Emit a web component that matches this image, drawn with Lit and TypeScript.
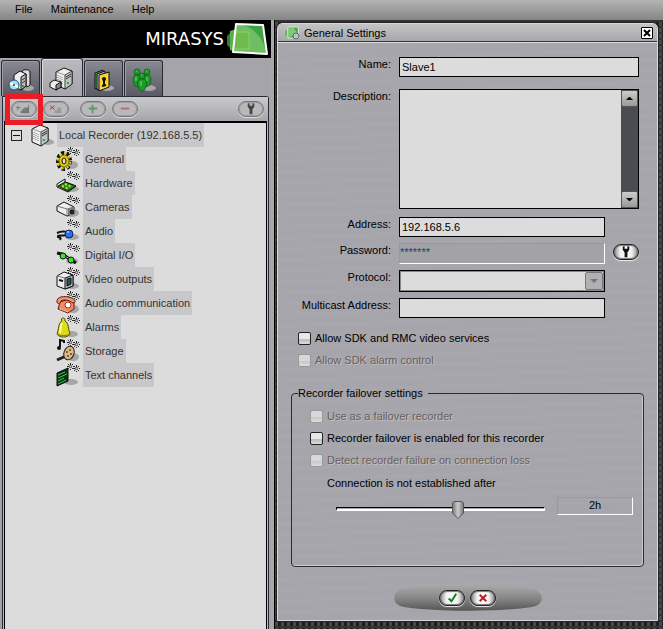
import { LitElement, html, css, svg } from "lit";
import { customElement, property } from "lit/decorators.js";

const shadow = (cx: number, cy: number, rx: number, ry: number) =>
  svg`<ellipse cx=${cx} cy=${cy} rx=${rx} ry=${ry} fill="#a6a6a6"/>`;

const star = (x: number, y: number) => svg`<g transform="translate(${x + 0.5} ${y + 0.5})">
  <path d="M0 -3.5V3.5M-3.5 0H3.5" stroke="#222" stroke-dasharray="2 1"/>
  <path d="M-2.5 -2.5L2.5 2.5M-2.5 2.5L2.5 -2.5" stroke="#333"/>
  <rect x="-1.5" y="-1.5" width="3" height="3" fill="#777"/><rect x="-.5" y="-.5" width="1" height="1" fill="#ccc"/></g>`;
const stars = svg`${star(14, 3)}${star(20, 5)}`;

const server = svg`
  <path d="M2 6L10 2L18 5V18L11 23L2 19Z" fill="#eee" stroke="#111"/>
  <path d="M11 9L18 5V18L11 23Z" fill="#c4c4c4" stroke="#111" stroke-width=".7"/>
  <path d="M2 6L11 9V22" fill="none" stroke="#888" stroke-width=".8"/>
  <path d="M4 9v8M6 10v8M8 11v8" stroke="#777" stroke-dasharray="1 1"/>
  <path d="M12 11l5-3M12 13l5-3" stroke="#333"/>
  <rect x="13" y="16" width="2" height="2" fill="#16b43a"/>`;

const icons: Record<string, unknown> = {
  recorder: svg`${shadow(18, 19, 6, 3)}${server}`,
  general: svg`${shadow(16, 18, 6, 4)}
    <ellipse cx="8" cy="14" rx="6" ry="8" fill="none" stroke="#111" stroke-width="4" stroke-dasharray="3 2"/>
    <ellipse cx="8" cy="14" rx="6" ry="7" fill="none" stroke="#e2c90c" stroke-width="3" stroke-dasharray="2 3" stroke-dashoffset="-.5"/>
    <ellipse cx="8" cy="14" rx="5" ry="6" fill="#e2c90c" stroke="#7d6d00"/>
    <ellipse cx="8" cy="14" rx="2" ry="3" fill="#ddd" stroke="#111"/>${stars}`,
  hardware: svg`${shadow(15, 18, 8, 3)}
    <path d="M1 13L9 8V11L20 15L12 21L1 16Z" fill="#eee" stroke="#111"/>
    <path d="M2 15L9 11L20 15L12 20Z" fill="#168c22" stroke="#111"/>
    <path d="M6 15l7 3M9 13l7 3" stroke="#d9e21b" stroke-width="2" stroke-dasharray="2 2"/>${stars}`,
  cameras: svg`${shadow(16, 18, 7, 4)}
    <path d="M1 11L8 7L18 12V18L11 21L1 16Z" fill="#eee" stroke="#111"/>
    <path d="M1 11L11 14L18 12M11 14V21" fill="none" stroke="#777"/>
    <path d="M12 14L18 12V18L12 20Z" fill="#777"/><circle cx="16" cy="17" r="3" fill="#222" stroke="#888"/>${stars}`,
  audio: svg`${shadow(16, 18, 7, 3)}
    <path d="M1 14C7 11 13 13 12 15C9 18 1 15 2 18C3 19 6 18 4 21" fill="none" stroke="#111" stroke-width="2"/>
    <circle cx="13" cy="15" r="4" fill="#2871ed" stroke="#0b2460"/><circle cx="12" cy="13" r="1" fill="#b6d1ff"/>${stars}`,
  io: svg`${shadow(16, 18, 6, 3)}
    <path d="M1 10L6 11L20 20" fill="none" stroke="#111" stroke-width="3"/>
    <path d="M9 13l5 3" stroke="#aaa"/>
    <circle cx="7" cy="13" r="3" fill="#35e52a" stroke="#111"/><circle cx="15" cy="17" r="3" fill="#35e52a" stroke="#111"/>${stars}`,
  video: svg`${shadow(16, 19, 7, 3)}
    <path d="M1 9L8 5L17 8V19L9 22L1 19Z" fill="#eee" stroke="#111"/>
    <path d="M9 11L17 8V19L9 22Z" fill="#bbb" stroke="#111"/><path d="M1 9L9 11" stroke="#777"/>
    <path d="M11 12L15 11V17L11 19Z" fill="#20566c" stroke="#111"/><path d="M3 13l4 1" stroke="#111" stroke-width="2"/>${stars}`,
  phone: svg`${shadow(17, 18, 6, 4)}
    <path d="M4 11L2 18L12 22L18 18V11L13 8Z" fill="#f28a66" stroke="#5d1d0c"/>
    <path d="M1 11C0 6 8 4 16 7C20 9 20 12 17 12C13 9 7 8 5 10C5 13 1 13 1 11Z" fill="#f4977a" stroke="#5d1d0c"/>
    <circle cx="12" cy="14" r="3" fill="#fff" stroke="#a13a1c"/><path d="M4 18l8 3" stroke="#fff" stroke-dasharray="1 1"/>${stars}`,
  alarms: svg`${shadow(16, 19, 6, 3)}
    <path d="M7 3C5 3 5 6 6 6C2 8 3 14 1 19C3 23 12 23 14 19C12 14 13 8 9 6C9 3 8 3 7 3Z" fill="#dedb18" stroke="#4d4b00"/>
    <path d="M6 8C4 12 5 15 4 18" stroke="#fffca0" stroke-width="2" fill="none"/>
    <path d="M1 19C4 21 11 21 14 19" stroke="#77740a" fill="none"/>${stars}`,
  storage: svg`${shadow(17, 18, 6, 4)}
    <path d="M4 8V1L8 2V4" fill="none" stroke="#111" stroke-width="2"/><circle cx="3" cy="9" r="2" fill="#111"/>
    <path d="M1 21L10 17" stroke="#222" stroke-width="3"/>
    <ellipse cx="13" cy="14" rx="5" ry="7" fill="#dcb985" stroke="#222" transform="rotate(20 13 14)"/>
    <circle cx="14" cy="11" r="1" fill="#5d4420"/><circle cx="11" cy="13" r="1" fill="#5d4420"/><circle cx="15" cy="15" r="1" fill="#5d4420"/><circle cx="12" cy="17" r="1" fill="#5d4420"/>${stars}`,
  text: svg`${shadow(15, 19, 7, 3)}
    <path d="M1 10L12 5V18L1 23Z" fill="#0c3012" stroke="#111"/>
    <path d="M2 12l7-3M2 15l9-4M2 18l6-3M2 21l8-4" stroke="#3ecb50"/>${stars}`,
  discServer: svg`${shadow(20, 20, 6, 3)}
    <path d="M14 4C14 1 22 1 22 4V17C21 19 17 19 14 18Z" fill="#ddd" stroke="#111"/>
    <path d="M6 7L12 3L18 6V18L13 22L6 19Z" fill="#eee" stroke="#111"/><path d="M13 9L18 6V18L13 22Z" fill="#bbb" stroke="#111"/>
    <path d="M14 12l3-2M14 15l3-2" stroke="#333"/><rect x="14" y="17" width="2" height="2" fill="#16b43a"/>
    <circle cx="6" cy="17" r="5" fill="#a8dcf4" stroke="#16506c"/><path d="M2 15l8 4" stroke="#fff" stroke-width="2"/><circle cx="6" cy="17" r="1" fill="#333"/>`,
  camServer: svg`${shadow(20, 20, 5, 3)}
    <g transform="translate(5 -1)">${server}</g>
    <path d="M1 16L5 13L12 15V20L7 23L1 20Z" fill="#eee" stroke="#111"/><path d="M7 18L12 15V20L7 23Z" fill="#888" stroke="#111"/>`,
  keys: svg`${shadow(16, 20, 7, 3)}
    <path d="M4 5L12 2V18L4 21Z" fill="#25c232" stroke="#111"/><path d="M6 6L14 3V19L6 22Z" fill="#f08be8" stroke="#111"/>
    <path d="M8 7L18 4V19L8 23Z" fill="#f2d631" stroke="#111"/>
    <circle cx="13" cy="11" r="2" fill="#111"/><path d="M13 11V18M11 18l4-1" stroke="#111" stroke-width="2"/>`,
  people: svg`${shadow(18, 20, 7, 3)}
    <g fill="#1d9a2a" stroke="#0b5c13" stroke-width=".7"><circle cx="6" cy="4" r="3"/><circle cx="16" cy="4" r="3"/>
    <path d="M4 7H9L10 15L7 19L3 17L2 10Z"/><path d="M13 7H18L20 10L19 17L15 19L12 15Z"/>
    <circle cx="11" cy="8" r="3"/><path d="M8 11H14L16 15L14 21L12 23H10L8 21L6 15Z"/></g>
    <path d="M5 3h1M15 3h1M10 7h1M10 13v5M5 9v4M16 9v4" stroke="#6bdc70"/>`,
};

const glyphs: Record<string, unknown> = {
  add: svg`<path d="M6 4v5M4 6h5" stroke="#4c8f55"/><path d="M9 12V9h2V7h2V6h4V3h1V12Z" fill="#777"/>`,
  del: svg`<path d="M6 4l5 4M6 8l5-4" stroke="#bd3030"/><path d="M11 12V9h3V6h4V12Z" fill="#999"/>`,
  plus: svg`<path d="M8 7H17M12 3V12" stroke="#5c9b65" stroke-width="2"/>`,
  minus: svg`<path d="M8 7H17" stroke="#b96a6a" stroke-width="2"/>`,
  wrench: svg`<path d="M9 2V5L11 8V13H14V8L16 5V2L14 1V4H11V1Z" fill="currentColor"/>`,
  ok: svg`<path d="M9 8L12 11L17 3" fill="none" stroke="#098011" stroke-width="2"/>`,
  cancel: svg`<path d="M9 4L16 11M9 11L16 4" fill="none" stroke="#b51a22" stroke-width="2"/>`,
};

@customElement("pill-button")
class PillButton extends LitElement {
  @property() glyph = "ok";
  @property() label = "";
  @property({ type: Boolean }) faded = false;
  static styles = css`
    :host { display: block; height: 16px; }
    button { display: block; width: 26px; height: 16px; padding: 0; border: 1px solid #222; border-radius: 8px; color: #111;
      background: linear-gradient(90deg, #888, #eee 25%, #fff 50%, #eee 75%, #888);
      box-shadow: 0 1px 1px #eee, inset 0 0 1px 1px #777; }
    .faded { border-color: #77777b; color: #444; background: #b9b9bc; box-shadow: 0 1px 0 #d9d9db, inset 0 0 0 1px #a0a0a4; }
    svg { display: block; width: 24px; height: 14px; }
  `;
  render() {
    return html`<button type="button" class=${this.faded ? "faded" : ""} aria-label=${this.label}>
      <svg viewBox="0 0 25 15">${glyphs[this.glyph]}</svg></button>`;
  }
}

@customElement("recorder-panel")
class RecorderPanel extends LitElement {
  static styles = css`
    :host { display: flex; flex-direction: column; background: #a5a4aa; border-right: 3px solid #a9a9ad; }
    .brand { display: flex; align-items: center; justify-content: flex-end; gap: 3px; height: 38px; padding-right: 2px; background: #000; color: #fff;
      font: 18px/24px "DejaVu Sans", sans-serif; }
    .logo { width: 42px; height: 34px; }
    .tabs { display: flex; align-items: flex-end; gap: 1px; height: 38px; padding-left: 1px; }
    .tab { width: 39px; height: 36px; padding: 4px 0 0; border: 1px solid #2a2a35; border-bottom: 0; border-radius: 3px 3px 0 0;
      background: linear-gradient(#898993, #5a5a66); box-shadow: inset 1px 1px 0 #9d9da6; }
    .tab.on { width: 42px; height: 38px; background: linear-gradient(#b9b9be, #a5a5ab); box-shadow: inset 1px 1px 0 #ddd; }
    .tab svg { display: block; margin: 0 auto; width: 26px; height: 26px; }
    .box { display: flex; flex: 1; flex-direction: column; margin: 0 2px; border: 1px solid #2a2a35; border-bottom: 0; border-radius: 0 3px 0 0; background: #bdbdc0; }
    .bar { position: relative; display: flex; align-items: center; gap: 6px; height: 24px; padding: 0 4px 0 8px; background: linear-gradient(#c9c9cb, #a6a6aa); }
    .gap { margin-left: 5px; }
    .end { margin-left: auto; }
    .mark { position: absolute; left: 2px; top: -3px; width: 28px; height: 21px; border: 5px solid #ed1c24; pointer-events: none; }
    .tree { flex: 1; margin: 0 1px; border: 1px solid #000; border-width: 2px 1px 0; background: #dcdcdc; color: #333; }
    ul { margin: 0; padding: 0; list-style: none; }
    .row { display: flex; align-items: center; gap: 3px; height: 24px; }
    .root { padding-left: 6px; }
    .child { padding-left: 51px; }
    .row svg { width: 24px; height: 24px; }
    .name { padding: 0 2px; line-height: 24px; background: #c8c8ca; }
    .fold { width: 11px; height: 11px; margin-right: 5px; padding: 0; border: 1px solid #222; background: #dcdcdc; }
    .fold::before { content: ""; display: block; width: 7px; height: 1px; margin: 0 1px; background: #111; }
  `;
  tabs = [["discServer", "System"], ["camServer", "Recorders"], ["keys", "Profiles"], ["people", "Users"]];
  items = [
    ["general", "General"], ["hardware", "Hardware"], ["cameras", "Cameras"], ["audio", "Audio"], ["io", "Digital I/O"],
    ["video", "Video outputs"], ["phone", "Audio communication"], ["alarms", "Alarms"], ["storage", "Storage"], ["text", "Text channels"],
  ];
  render() {
    return html`
      <div class="brand"><span>MIRASYS</span>
        <svg class="logo" viewBox="0 0 42 34">
          <path d="M4 10L0 14V23L4 27Z" fill="#347e31"/><path d="M9 7L3 9V28L9 30Z" fill="#5bae4e"/>
          <path d="M9 2L36 3L40 32L6 30Z" fill="#3fa344"/>
          <path d="M9 2L16 3C29 7 37 18 39 31L6 30Z" fill="#6fbe63"/>
          <path d="M8 10H22V27H7" fill="#6fbb4d" stroke="#8bcf6c"/>
          <path d="M9 2L36 3L40 32L6 30Z" fill="none" stroke="#fff" stroke-width="2" stroke-linejoin="round"/>
        </svg>
      </div>
      <div class="tabs">
        ${this.tabs.map(([icon, name], i) => html`
          <button class="tab ${i === 1 ? "on" : ""}" aria-label=${name}><svg viewBox="0 0 26 26">${icons[icon]}</svg></button>`)}
      </div>
      <div class="box">
        <div class="bar">
          <pill-button faded glyph="add" label="Add recorder"></pill-button>
          <pill-button faded glyph="del" label="Remove recorder"></pill-button>
          <pill-button class="gap" faded glyph="plus" label="Add"></pill-button>
          <pill-button faded glyph="minus" label="Remove"></pill-button>
          <pill-button class="end" faded glyph="wrench" label="Settings"></pill-button>
          <span class="mark"></span>
        </div>
        <div class="tree">
          <div class="row root"><button class="fold" aria-label="Collapse"></button>
            <svg viewBox="0 0 24 24">${icons.recorder}</svg><span class="name">Local Recorder (192.168.5.5)</span></div>
          <ul>${this.items.map(([icon, name]) => html`
            <li class="row child"><svg viewBox="0 0 24 24">${icons[icon]}</svg><span class="name">${name}</span></li>`)}</ul>
        </div>
      </div>`;
  }
}

@customElement("settings-dialog")
class SettingsDialog extends LitElement {
  static styles = css`
    :host { display: flex; flex-direction: column; border: 1px solid #d2dede; border-radius: 5px 5px 0 0; outline: 1px solid #222;
      background: repeating-linear-gradient(178deg, #a6a5ab 0 3px, #a8a7ad 4px 6px, #a6a5ab 7px 11px); color: #000; }
    header { display: flex; align-items: center; gap: 4px; height: 17px; padding: 0 4px 0 6px; border-bottom: 1px solid #333;
      border-radius: 5px 5px 0 0; background: linear-gradient(#c4c4c6, #a8a8ac); box-shadow: 0 1px 0 #ddd; }
    h1 { flex: 1; margin: 0; font-size: 11px; font-weight: 400; }
    header svg { width: 16px; height: 14px; }
    .close { width: 12px; height: 12px; padding: 0; border: 1px solid #000; border-radius: 1px; background: #fff; }
    .close svg { display: block; width: 10px; height: 10px; }
    form { display: flex; flex-direction: column; flex: 1; padding: 15px 13px 9px; }
    .fields { display: grid; grid-template-columns: 100px 1fr 26px; column-gap: 8px; padding-right: 5px; }
    .fields > label { text-align: right; white-space: nowrap; line-height: 14px; }
    input, textarea, select { box-sizing: border-box; margin: 0; font: inherit; color: #000; }
    .text { width: 100%; height: 20px; padding: 0 2px; border: 1px solid #000; border-radius: 0; background: #dcdcdc; outline: none; }
    .wide { grid-column: 2 / 4; }
    .area { position: relative; height: 120px; margin: 12px 0 8px; }
    textarea { display: block; resize: none; overflow: hidden; }
    .area textarea { height: 120px; }
    .scroll { position: absolute; right: 1px; top: 1px; bottom: 1px; display: flex; flex-direction: column; justify-content: space-between; width: 17px; background: #4b4b52; }
    .scroll button { height: 17px; padding: 0; border: 1px solid #555; border-radius: 2px; background: linear-gradient(#ccc, #999); }
    .scroll svg { display: block; margin: auto; width: 7px; height: 5px; }
    .desc { margin-top: 12px; }
    .pass { height: 21px; margin: 6px 0; padding: 0 0 4px; border-color: #999 #fff #fff #999; background: #a3a3a6; }
    .pass, .pass:disabled { color: #16416c; }
    .combo { position: relative; height: 22px; margin-bottom: 6px; }
    select { appearance: none; }
    .combo .text { height: 22px; box-shadow: inset 0 0 0 1px #888; }
    .combo svg { position: absolute; right: 2px; top: 2px; width: 16px; height: 16px; border: 1px solid #777; border-radius: 2px; background: #b1b1b4; pointer-events: none; }
    .tool { margin-top: 7px; }
    .low { margin-top: 6px; }
    .checks { display: grid; gap: 8px; margin: 13px 0 0 7px; }
    .check { display: flex; align-items: center; gap: 4px; height: 14px; }
    .check input { appearance: none; width: 13px; height: 13px; border: 1px solid #222; border-radius: 2px; background: linear-gradient(#e8e8e8 50%, #bbb 60%, #ddd); }
    .check input:disabled { border-color: #999; background: linear-gradient(#d8d8d8 50%, #c8c8c8 60%, #ddd); }
    .off { color: #6a5f5d; text-shadow: 1px 1px 0 #c0c0c0; }
    fieldset { min-width: 0; height: 181px; box-sizing: border-box; margin: 19px 0 0; padding: 9px 10px 0 18px; border: 1px solid #2a2a35; border-radius: 4px; box-shadow: inset -1px -1px 0 #ccc; }
    legend { margin-left: -12px; padding: 0 5px 0 0; line-height: 14px; }
    .group { display: grid; gap: 8px; }
    .after { margin: 9px 0 7px 17px; line-height: 14px; }
    .slide { display: grid; grid-template-columns: 1fr 76px; gap: 12px; align-items: start; padding-left: 26px; }
    .range { appearance: none; width: 100%; height: 24px; background: none; }
    .range::-webkit-slider-runnable-track { height: 4px; border: 1px solid #000; border-color: #000 #fff #fff #000; border-bottom-width: 2px; box-sizing: border-box; }
    .range::-webkit-slider-thumb { appearance: none; width: 12px; height: 18px; margin-top: -7px; border: 0; border-radius: 0;
      background: url("data:image/svg+xml,%3Csvg xmlns='http://www.w3.org/2000/svg' viewBox='0 0 12 18'%3E%3ClinearGradient id='t'%3E%3Cstop stop-color='%23777'/%3E%3Cstop offset='.5' stop-color='%23ccc'/%3E%3Cstop offset='1' stop-color='%23777'/%3E%3C/linearGradient%3E%3Cpath d='M2 .5H10L11.5 2V12L6 17.5L.5 12V2Z' fill='url(%23t)' stroke='%23555'/%3E%3C/svg%3E") no-repeat center / 12px 18px; }
    output { height: 16px; border: 1px solid #999; border-right-color: #fff; border-bottom-color: #fff; line-height: 15px; text-align: center; }
    footer { display: flex; justify-content: center; margin-top: auto; }
    .pad { position: relative; display: flex; align-items: center; justify-content: center; gap: 5px; width: 148px; height: 26px; }
    .plate { position: absolute; inset: 0; width: 100%; height: 100%; }
    .pad pill-button { position: relative; }
  `;
  check(label: string, off = false) {
    return html`<label class="check ${off ? "off" : ""}"><input type="checkbox" ?disabled=${off}>${label}</label>`;
  }
  render() {
    return html`
      <header>
        <svg viewBox="0 0 16 14"><path d="M3 3L1 5V9L3 11Z" fill="#6ab85c"/><path d="M4 1L14 1L15 12L4 12Z" fill="#42a344" stroke="#d8f0d5"/><path d="M5 2L10 2L14 8L5 11Z" fill="#7fca75"/><circle cx="12" cy="10" r="3" fill="#bbc4cf" stroke="#667"/></svg>
        <h1>General Settings</h1>
        <button class="close" aria-label="Close"><svg viewBox="0 0 10 10"><path d="M2 2L8 8M8 2L2 8" stroke="#000" stroke-width="2"/></svg></button>
      </header>
      <form>
        <div class="fields">
          <label for="name">Name:</label><input id="name" class="text wide" value="Slave1">
          <label class="desc" for="desc">Description:</label>
          <div class="area wide"><textarea id="desc" class="text"></textarea>
            <div class="scroll">
              <button type="button" aria-label="Scroll up"><svg viewBox="0 0 7 5"><path d="M0 4L3 1H4L7 4Z"/></svg></button>
              <button type="button" aria-label="Scroll down"><svg viewBox="0 0 7 5"><path d="M0 1L3 4H4L7 1Z"/></svg></button>
            </div></div>
          <label for="addr">Address:</label><input id="addr" class="text" value="192.168.5.6"><span></span>
          <label class="low" for="pass">Password:</label><input id="pass" class="text pass" value="*******" disabled>
          <pill-button class="tool" glyph="wrench" label="Change password"></pill-button>
          <label for="proto">Protocol:</label>
          <div class="combo"><select id="proto" class="text"><option></option></select>
            <svg viewBox="0 0 16 16"><path d="M4 6H12L8 10Z" fill="#777"/></svg></div><span></span>
          <label for="multi">Multicast Address:</label><input id="multi" class="text"><span></span>
        </div>
        <div class="checks">${this.check("Allow SDK and RMC video services")}${this.check("Allow SDK alarm control", true)}</div>
        <fieldset>
          <legend>Recorder failover settings</legend>
          <div class="group">
            ${this.check("Use as a failover recorder", true)}
            ${this.check("Recorder failover is enabled for this recorder")}
            ${this.check("Detect recorder failure on connection loss", true)}
          </div>
          <div class="after"><label for="delay">Connection is not established after</label></div>
          <div class="slide"><input id="delay" class="range" type="range" min="0" max="100" value="59"><output for="delay">2h</output></div>
        </fieldset>
        <footer><div class="pad">
          <svg class="plate" viewBox="0 0 148 26"><defs><linearGradient id="g" x2="0" y2="1"><stop stop-color="#a8a8a8"/><stop offset=".5" stop-color="#888"/><stop offset="1" stop-color="#555"/></linearGradient></defs>
            <path d="M10 4C45 -1 103 -1 138 4C151 6 151 20 138 22C103 27 45 27 10 22C-3 20 -3 6 10 4Z" fill="url(#g)"/></svg>
          <pill-button glyph="ok" label="OK"></pill-button><pill-button glyph="cancel" label="Cancel"></pill-button>
        </div></footer>
      </form>`;
  }
}

@customElement("app-root")
class AppRoot extends LitElement {
  static styles = css`
    :host { display: flex; flex-direction: column; min-height: 100vh; font: 11px/14px "Liberation Sans", Arial, sans-serif; background: #222; }
    nav { display: flex; gap: 18px; height: 20px; padding: 0 0 2px 15px; box-sizing: border-box; background: linear-gradient(#b4b4b4, #858585); }
    nav button { padding: 0; border: 0; background: none; font: inherit; color: #000; }
    main { display: grid; grid-template-columns: 274px 1fr; flex: 1; }
    .desk { padding: 3px 5px 8px 2px; background-color: #1f1d1e;
      background-image: linear-gradient(#353233 2px, transparent 2px), linear-gradient(90deg, #4a4748 3px, transparent 3px);
      background-size: 6px 6px; display: flex; border-left: 1px solid #000; }
    settings-dialog { flex: 1; }
  `;
  render() {
    return html`
      <nav><button>File</button><button>Maintenance</button><button>Help</button></nav>
      <main><recorder-panel></recorder-panel><div class="desk"><settings-dialog></settings-dialog></div></main>`;
  }
}
